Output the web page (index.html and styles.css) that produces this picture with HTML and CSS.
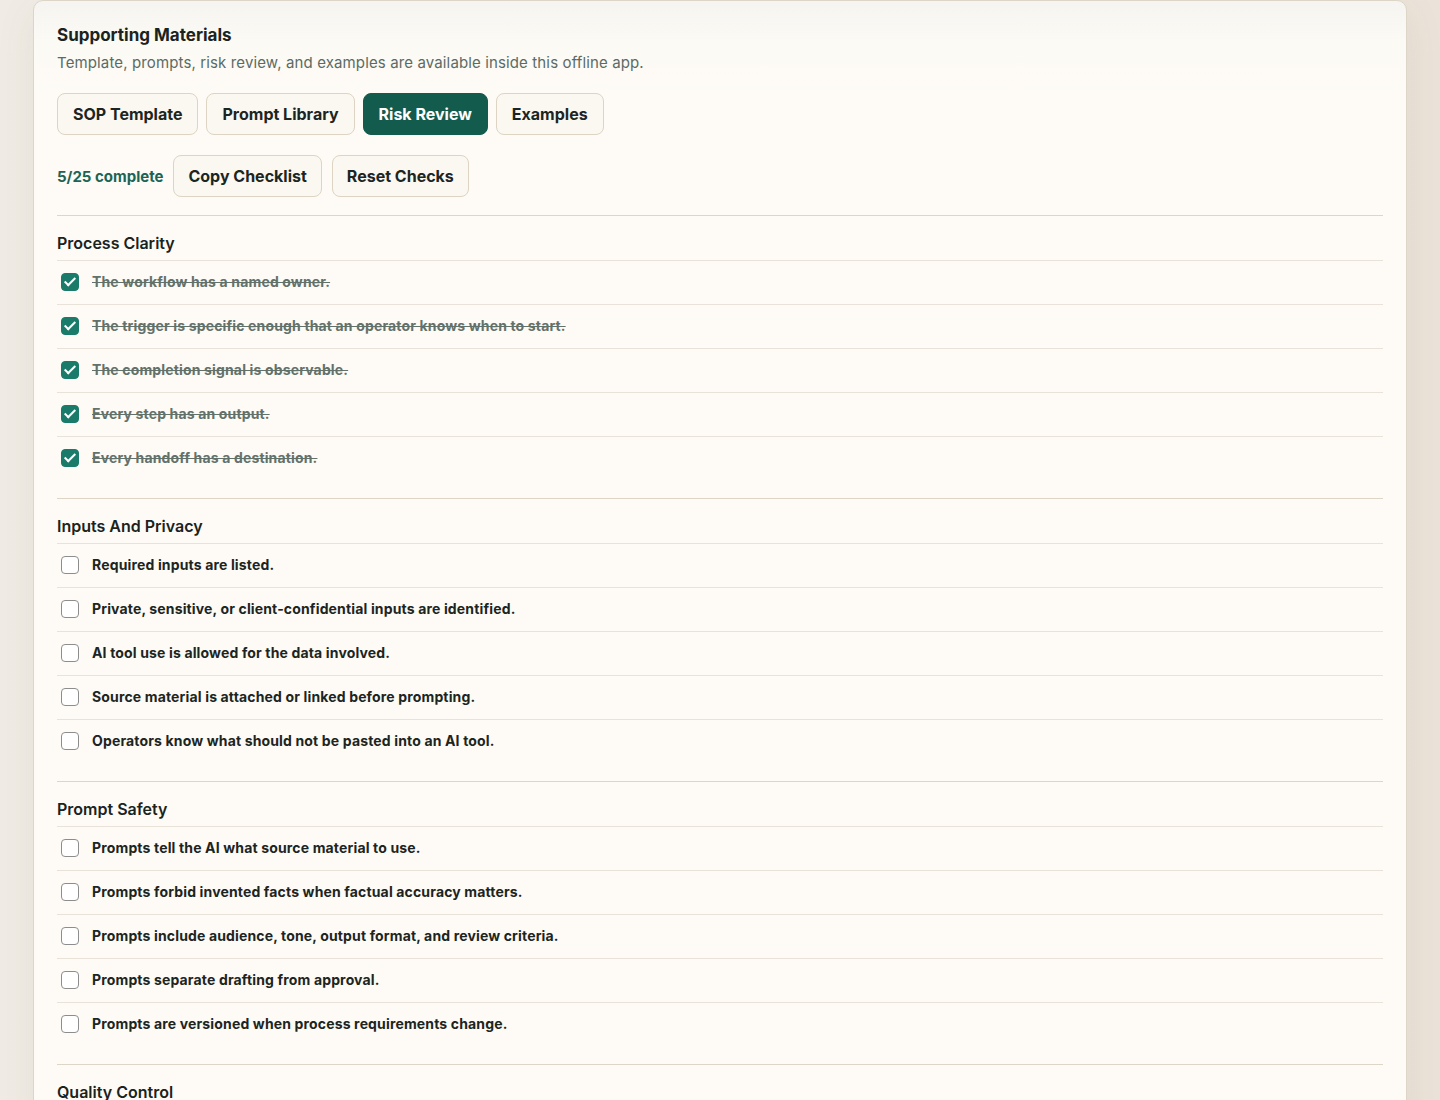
FILE: index.html
```html
<!DOCTYPE html>
<html lang="en">
<head>
    <meta charset="UTF-8">
    <meta name="viewport" content="width=device-width, initial-scale=1.0">
    <title>Supporting Materials</title>
    <link rel="stylesheet" href="styles.css">
</head>
<body>
    <div class="page">
        <section class="card">
            <h2 class="card-title">Supporting Materials</h2>
            <p class="card-sub">Template, prompts, risk review, and examples are available inside this offline app.</p>

            <div class="tabs">
                <button class="btn">SOP Template</button>
                <button class="btn">Prompt Library</button>
                <button class="btn active">Risk Review</button>
                <button class="btn">Examples</button>
            </div>

            <div class="toolbar">
                <span class="progress" id="progress">5/25 complete</span>
                <button class="btn" id="copyBtn">Copy Checklist</button>
                <button class="btn" id="resetBtn">Reset Checks</button>
            </div>

            <div class="group">
                <h3>Process Clarity</h3>
                <label class="item"><input type="checkbox" checked><span>The workflow has a named owner.</span></label>
                <label class="item"><input type="checkbox" checked><span>The trigger is specific enough that an operator knows when to start.</span></label>
                <label class="item"><input type="checkbox" checked><span>The completion signal is observable.</span></label>
                <label class="item"><input type="checkbox" checked><span>Every step has an output.</span></label>
                <label class="item"><input type="checkbox" checked><span>Every handoff has a destination.</span></label>
            </div>

            <div class="group">
                <h3>Inputs And Privacy</h3>
                <label class="item"><input type="checkbox"><span>Required inputs are listed.</span></label>
                <label class="item"><input type="checkbox"><span>Private, sensitive, or client-confidential inputs are identified.</span></label>
                <label class="item"><input type="checkbox"><span>AI tool use is allowed for the data involved.</span></label>
                <label class="item"><input type="checkbox"><span>Source material is attached or linked before prompting.</span></label>
                <label class="item"><input type="checkbox"><span>Operators know what should not be pasted into an AI tool.</span></label>
            </div>

            <div class="group">
                <h3>Prompt Safety</h3>
                <label class="item"><input type="checkbox"><span>Prompts tell the AI what source material to use.</span></label>
                <label class="item"><input type="checkbox"><span>Prompts forbid invented facts when factual accuracy matters.</span></label>
                <label class="item"><input type="checkbox"><span>Prompts include audience, tone, output format, and review criteria.</span></label>
                <label class="item"><input type="checkbox"><span>Prompts separate drafting from approval.</span></label>
                <label class="item"><input type="checkbox"><span>Prompts are versioned when process requirements change.</span></label>
            </div>

            <div class="group">
                <h3>Quality Control</h3>
                <label class="item"><input type="checkbox"><span>A human reviews every AI draft before it leaves the team.</span></label>
                <label class="item"><input type="checkbox"><span>Review criteria are written down.</span></label>
                <label class="item"><input type="checkbox"><span>Facts, names, and numbers are checked against the source.</span></label>
                <label class="item"><input type="checkbox"><span>Rejected drafts are logged with a reason.</span></label>
                <label class="item"><input type="checkbox"><span>Final approval has a named owner.</span></label>
            </div>

            <div class="group">
                <h3>Maintenance</h3>
                <label class="item"><input type="checkbox"><span>The SOP has a review date.</span></label>
                <label class="item"><input type="checkbox"><span>Changes are recorded in a version note.</span></label>
                <label class="item"><input type="checkbox"><span>Operators know where to report problems.</span></label>
                <label class="item"><input type="checkbox"><span>Examples are refreshed when the process changes.</span></label>
                <label class="item"><input type="checkbox"><span>Retired prompts are removed from the library.</span></label>
            </div>
        </section>
    </div>

    <script>
        const boxes = document.querySelectorAll('.item input');
        const progress = document.getElementById('progress');

        function updateProgress() {
            const done = document.querySelectorAll('.item input:checked').length;
            progress.textContent = done + '/' + boxes.length + ' complete';
        }

        boxes.forEach(function(box) {
            box.addEventListener('change', updateProgress);
        });

        document.getElementById('resetBtn').addEventListener('click', function() {
            boxes.forEach(function(box) { box.checked = false; });
            updateProgress();
        });

        document.getElementById('copyBtn').addEventListener('click', function() {
            const lines = [];
            document.querySelectorAll('.group').forEach(function(group) {
                lines.push(group.querySelector('h3').textContent);
                group.querySelectorAll('.item').forEach(function(item) {
                    const mark = item.querySelector('input').checked ? '[x] ' : '[ ] ';
                    lines.push(mark + item.textContent.trim());
                });
                lines.push('');
            });
            if (navigator.clipboard) {
                navigator.clipboard.writeText(lines.join('\n'));
            }
        });

        updateProgress();
    </script>
</body>
</html>
```

FILE: styles.css
```css
body {
    margin: 0;
    font-family: Inter, "Noto Sans", Arial, sans-serif;
    color: #1c2522;
    background: linear-gradient(90deg, #f0ece5 0%, #f3efe9 45%, #ebe3d9 100%);
    min-height: 100vh;
}

.page {
    padding: 0 33px 40px;
}

.card {
    background: linear-gradient(180deg, #f5f4f0 0, #fcfaf5 40px, #fefbf6 90px);
    border: 1px solid #ddd5c7;
    border-radius: 10px;
    padding: 23px 23px 30px;
    box-shadow: 0 10px 40px rgba(90, 70, 40, 0.08);
}

.card-title {
    margin: 0;
    font-size: 17px;
    line-height: 22px;
    font-weight: 700;
    color: #1a2320;
}

.card-sub {
    margin: 6px 0 0;
    font-size: 15px;
    line-height: 22px;
    letter-spacing: 0.13px;
    color: #5b6b64;
}

.tabs {
    display: flex;
    gap: 8px;
    margin-top: 19px;
}

.tabs .btn {
    padding: 10px 15px;
}

.toolbar {
    display: flex;
    align-items: center;
    gap: 10px;
    margin-top: 20px;
    padding-bottom: 18px;
}

.btn {
    font-family: inherit;
    font-size: 16px;
    line-height: 20px;
    font-weight: 700;
    color: #1c2522;
    background-color: #fbf8f2;
    border: 1px solid #ddd4c3;
    border-radius: 8px;
    padding: 10px 14px;
    cursor: pointer;
}

.btn:hover {
    background-color: #f4efe6;
}

.btn.active {
    background-color: #135b4d;
    border-color: #135b4d;
    color: #fff;
}

.progress {
    font-size: 15px;
    font-weight: 700;
    color: #1c6454;
}

.group {
    border-top: 1px solid #ddd5c6;
    padding: 15px 0 18px;
}

.group h3 {
    margin: 0 0 5px;
    font-size: 16px;
    line-height: 24px;
    font-weight: 600;
    color: #1a2320;
}

.item {
    display: flex;
    align-items: center;
    gap: 13px;
    border-top: 1px solid #e8e2d8;
    padding: 11px 4px 13px;
    font-size: 14px;
    line-height: 19px;
    font-weight: 700;
    letter-spacing: 0.15px;
    color: #1c2522;
    cursor: pointer;
}

.item input {
    appearance: none;
    -webkit-appearance: none;
    position: relative;
    flex: none;
    width: 18px;
    height: 18px;
    margin: 0;
    background: #fff;
    border: 1px solid #8d8d8d;
    border-radius: 4px;
    cursor: pointer;
}

.item input:checked {
    background: #1b7b6b;
    border-color: #1b7b6b;
}

/* white tick inside a checked box */
.item input:checked::after {
    content: "";
    position: absolute;
    left: 5px;
    top: 1.5px;
    width: 4px;
    height: 9px;
    border: solid #fff;
    border-width: 0 2.5px 2.5px 0;
    transform: rotate(45deg);
}

.item input:checked + span {
    color: #63716b;
    text-decoration: line-through;
}
```
